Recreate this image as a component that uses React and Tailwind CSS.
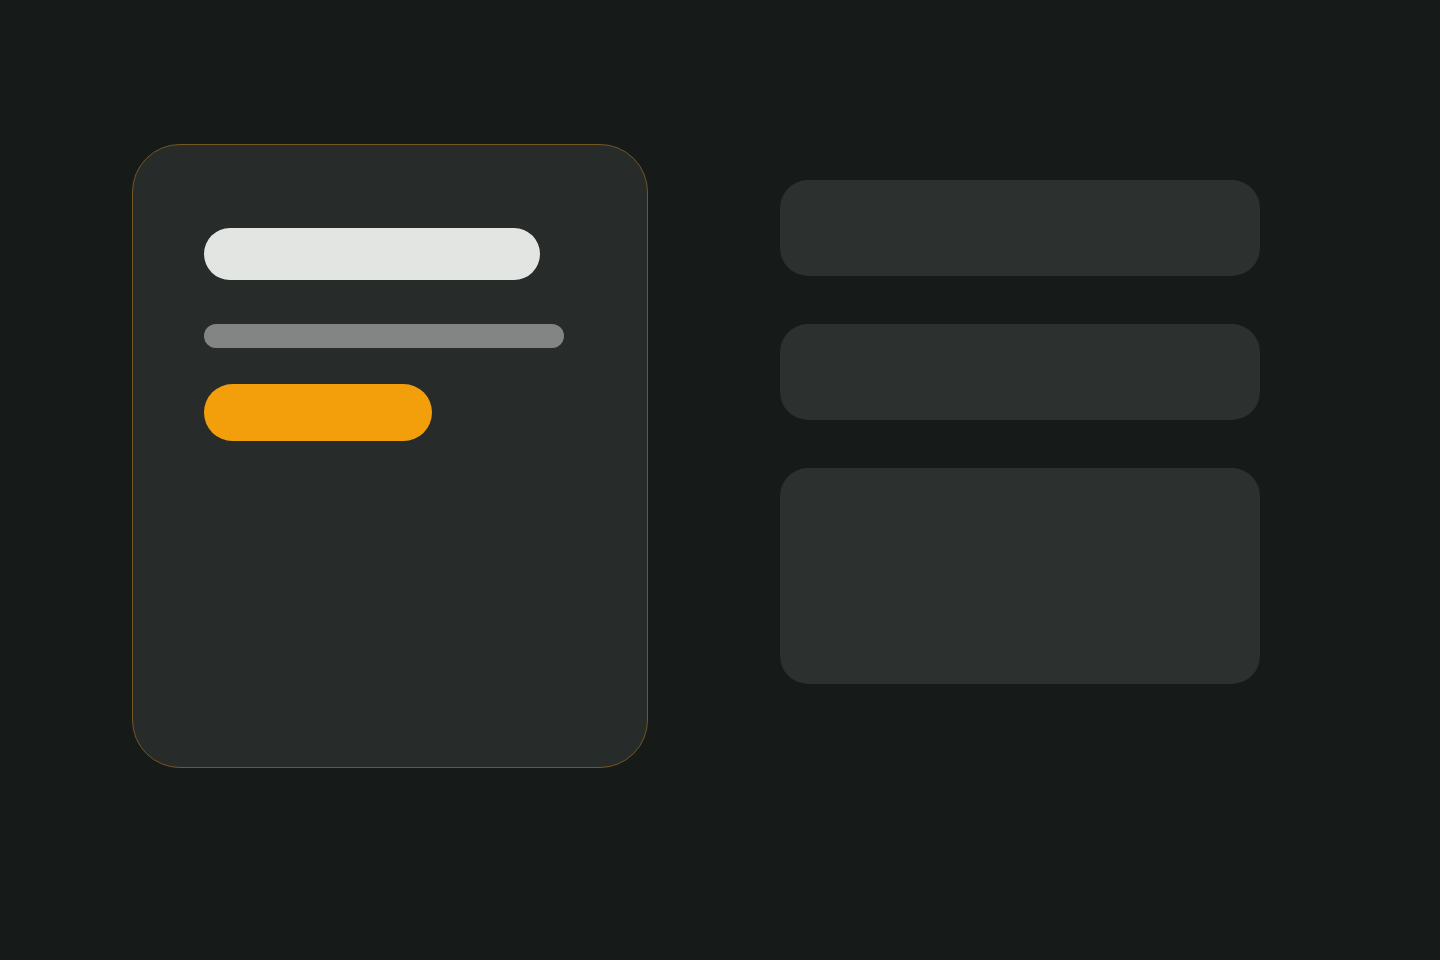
import React from "react";

const App = () => {
  return (
    <div className="min-h-[960px] w-full bg-[#161a18] flex items-start gap-[132px] pl-[132px] pt-[144px]">
      {/* left card */}
      <div className="w-[516px] h-[624px] rounded-[48px] border border-[#765622] bg-[#272b2a] pt-[83px] px-[71px] flex flex-col items-start">
        <div className="w-[336px] h-[52px] rounded-full bg-[#e3e5e2]" />
        <div className="mt-[44px] w-[360px] h-[24px] rounded-full bg-[#838584]" />
        <div className="mt-[36px] w-[228px] h-[57px] rounded-full bg-[#f39f0c]" />
      </div>

      {/* right column */}
      <div className="mt-[36px] w-[480px] flex flex-col gap-[48px]">
        <div className="h-[96px] rounded-[28px] bg-[#2c302f]" />
        <div className="h-[96px] rounded-[28px] bg-[#2c302f]" />
        <div className="h-[216px] rounded-[28px] bg-[#2c302f]" />
      </div>
    </div>
  );
};

export default App;
